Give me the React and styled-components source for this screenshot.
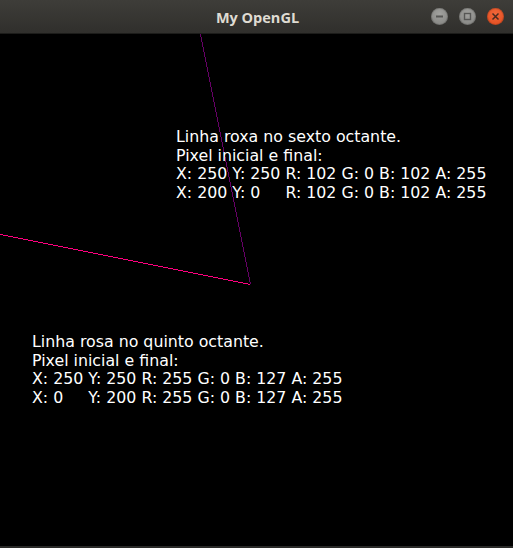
import React from "react";
import styled, { createGlobalStyle } from "styled-components";

const GlobalStyle = createGlobalStyle`
  html, body {
    margin: 0;
    padding: 0;
    background: #000;
  }
`;

const lines = [
  { id: "roxa", from: [250, 250], to: [200, 0], color: "rgb(102, 0, 102)" },
  { id: "rosa", from: [250, 250], to: [0, 200], color: "rgb(255, 0, 127)" },
];

const labels = [
  {
    id: "roxa",
    x: 176,
    y: 94,
    text: [
      "Linha roxa no sexto octante.",
      "Pixel inicial e final:",
      "X: 250 Y: 250 R: 102 G: 0 B: 102 A: 255",
      "X: 200 Y: 0     R: 102 G: 0 B: 102 A: 255",
    ],
  },
  {
    id: "rosa",
    x: 32,
    y: 299,
    text: [
      "Linha rosa no quinto octante.",
      "Pixel inicial e final:",
      "X: 250 Y: 250 R: 255 G: 0 B: 127 A: 255",
      "X: 0     Y: 200 R: 255 G: 0 B: 127 A: 255",
    ],
  },
];

const App = () => {
  return (
    <Window>
      <GlobalStyle />
      <TitleBar>
        <Title>My OpenGL</Title>
        <Controls>
          <WinButton>
            <svg width="9" height="9" viewBox="0 0 9 9">
              <rect x="1" y="3.5" width="7" height="2" fill="#575755" />
            </svg>
          </WinButton>
          <WinButton>
            <svg width="9" height="9" viewBox="0 0 9 9">
              <rect x="1.5" y="1.5" width="6" height="6" fill="none" stroke="#575755" strokeWidth="1.4" />
            </svg>
          </WinButton>
          <WinButton close>
            <svg width="9" height="9" viewBox="0 0 9 9">
              <path d="M1.5 1.5 L7.5 7.5 M7.5 1.5 L1.5 7.5" stroke="#4a2a20" strokeWidth="1.5" />
            </svg>
          </WinButton>
        </Controls>
      </TitleBar>
      <Canvas>
        <svg width="513" height="512" shapeRendering="crispEdges">
          {lines.map((l) => (
            <line
              key={l.id}
              x1={l.from[0] + 0.5}
              y1={l.from[1] + 0.5}
              x2={l.to[0] + 0.5}
              y2={l.to[1] + 0.5}
              stroke={l.color}
              strokeWidth="1"
            />
          ))}
        </svg>
        {labels.map((b) => (
          <Label key={b.id} style={{ left: b.x, top: b.y }}>
            {b.text.map((t, i) => (
              <div key={i}>{t}</div>
            ))}
          </Label>
        ))}
      </Canvas>
      <BottomEdge />
    </Window>
  );
};

const Window = styled.div`
  width: 513px;
  height: 548px;
  display: flex;
  flex-direction: column;
  background: #000;
  overflow: hidden;
`;

const TitleBar = styled.div`
  position: relative;
  height: 33px;
  flex-shrink: 0;
  display: flex;
  align-items: center;
  justify-content: center;
  background: linear-gradient(#3e3d39, #302f2c);
  border-bottom: 1px solid #1c1c1a;
`;

const Title = styled.div`
  font-family: "Open Sans", "DejaVu Sans", sans-serif;
  font-weight: 700;
  font-size: 14.5px;
  color: #dfdbd2;
  margin-left: 2px;
  margin-top: 1px;
`;

const Controls = styled.div`
  position: absolute;
  right: 9px;
  top: 8px;
  display: flex;
  gap: 11px;
`;

const WinButton = styled.div`
  width: 17px;
  height: 17px;
  border-radius: 50%;
  display: flex;
  align-items: center;
  justify-content: center;
  background: ${(props) =>
    props.close
      ? "radial-gradient(circle at 50% 35%, #f2673a, #e04a1c)"
      : "radial-gradient(circle at 50% 35%, #a2a29f, #80807d)"};
  box-shadow: inset 0 0 0 1px rgba(0, 0, 0, 0.15);
`;

const Canvas = styled.div`
  position: relative;
  flex: 1;
  background: #000;

  svg {
    display: block;
  }
`;

const Label = styled.div`
  position: absolute;
  font-family: "DejaVu Sans", sans-serif;
  font-size: 15.8px;
  line-height: 18.5px;
  color: #fff;
  white-space: pre;
`;

const BottomEdge = styled.div`
  height: 2px;
  flex-shrink: 0;
  background: #2a2a28;
`;

export default App;
